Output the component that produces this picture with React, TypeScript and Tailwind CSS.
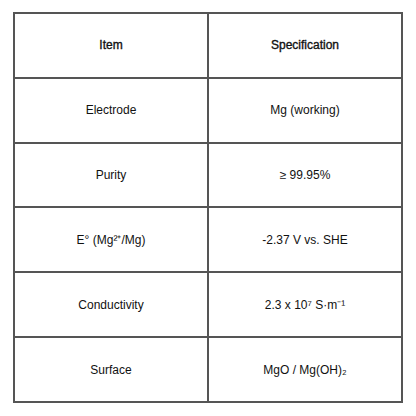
const rows = [
  { item: "Electrode", spec: "Mg (working)" },
  { item: "Purity", spec: "≥ 99.95%" },
  { item: "E° (Mg²⁺/Mg)", spec: "-2.37 V vs. SHE" },
  { item: "Conductivity", spec: "2.3 x 10⁷ S·m⁻¹" },
  { item: "Surface", spec: "MgO / Mg(OH)₂" },
];

const Cell = ({ children, head, left }: { children: React.ReactNode; head?: boolean; left?: boolean }) => (
  <div
    className={`flex-1 flex items-center justify-center text-[12px] text-[#111] ${left ? "border-r-2 border-[#555]" : ""} ${
      head ? "font-medium [-webkit-text-stroke:0.35px_#111]" : ""
    }`}
  >
    {children}
  </div>
);

export default function App() {
  return (
    <div className="w-[416px] h-[416px] bg-white pt-[12px] pl-[13px]" style={{ fontFamily: '"Liberation Sans", Arial, sans-serif' }}>
      <div className="w-[390px] h-[391px] border-2 border-[#555] flex flex-col">
        <div className="flex-1 flex">
          <Cell head left>Item</Cell>
          <Cell head>Specification</Cell>
        </div>
        {rows.map((r) => (
          <div key={r.item} className="flex-1 flex border-t-2 border-[#555]">
            <Cell left>{r.item}</Cell>
            <Cell>{r.spec}</Cell>
          </div>
        ))}
      </div>
    </div>
  );
}
